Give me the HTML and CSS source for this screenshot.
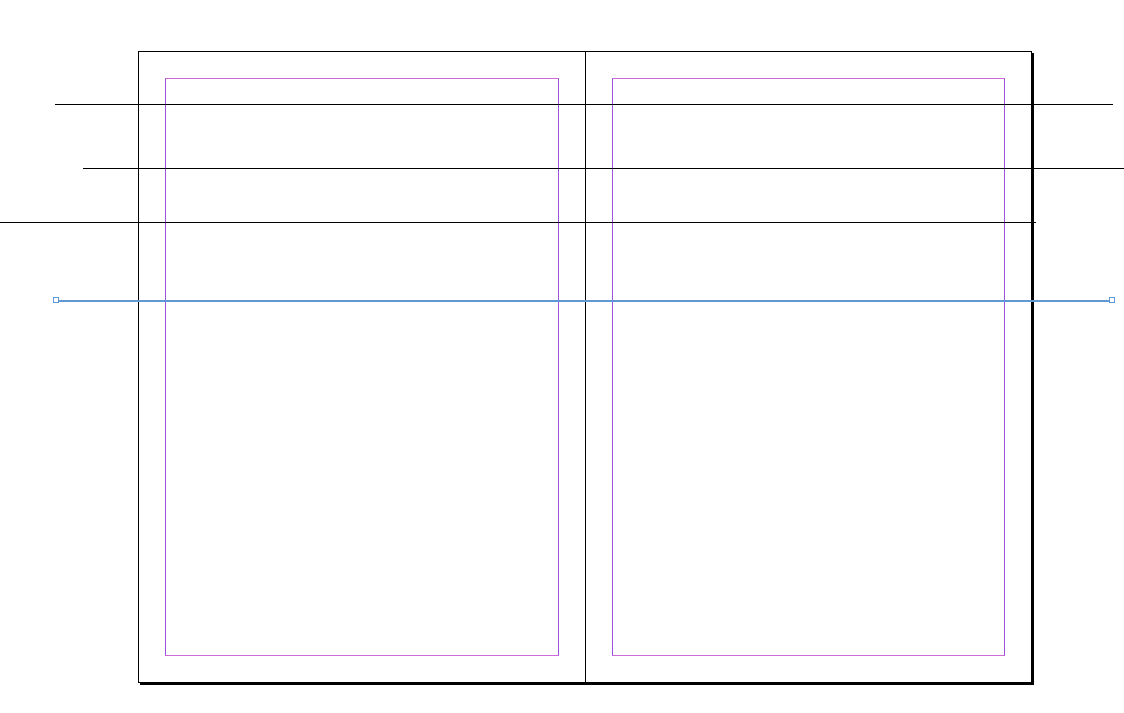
FILE: index.html
```html
<!DOCTYPE html>
<html>
<head>
    <meta charset="UTF-8">
    <meta name="viewport" content="width=device-width, initial-scale=1.0">
    <title>Spread</title>
    <link rel="stylesheet" href="styles.css">
</head>
<body>
    <div id="pasteboard">
        <div class="spread">
            <div class="page page-left">
                <div class="margins"></div>
            </div>
            <div class="page page-right">
                <div class="margins"></div>
            </div>
        </div>

        <!-- ruler guides -->
        <div class="guide guide-1"></div>
        <div class="guide guide-2"></div>
        <div class="guide guide-3"></div>

        <!-- selected guide -->
        <div class="guide-selected">
            <span class="handle handle-start"></span>
            <span class="handle handle-end"></span>
        </div>
    </div>
</body>
</html>
```

FILE: styles.css
```css
body {
    margin: 0;
    padding: 0;
    background-color: #fff;
    font-family: "Liberation Sans", Arial, sans-serif;
    overflow: hidden;
}

#pasteboard {
    position: relative;
    width: 1124px;
    height: 713px;
    padding: 51px 0 0 138px;
    box-sizing: border-box;
    overflow: hidden;
}

.spread {
    display: flex;
    width: 894px;
    height: 632px;
    box-sizing: border-box;
    border: 1px solid #000;
    box-shadow: 2px 2px 0 0 #000;
    background-color: #fff;
}

.page {
    padding: 26px;
    box-sizing: border-box;
    display: flex;
}

.page-left {
    width: 447px;
    border-right: 1px solid #000;
}

.page-right {
    width: 445px;
}

.margins {
    flex: 1;
    border-top: 1px solid #d06ad8;
    border-bottom: 1px solid #d06ad8;
    border-left: 1px solid #9a52dc;
    border-right: 1px solid #9a52dc;
}

.guide {
    position: absolute;
    height: 1px;
    background-color: #000;
}

.guide-1 {
    top: 104px;
    left: 55px;
    width: 1058px;
}

.guide-2 {
    top: 168px;
    left: 83px;
    right: 0;
}

.guide-3 {
    top: 222px;
    left: 0;
    width: 1036px;
}

.guide-selected {
    position: absolute;
    top: 300px;
    left: 56px;
    width: 1056px;
    height: 2px;
    background-color: #5f98d4;
}

.handle {
    position: absolute;
    top: -3px;
    width: 4px;
    height: 4px;
    border: 1px solid #5f98d4;
    background-color: #fff;
}

.handle-start {
    left: -3px;
}

.handle-end {
    right: -3px;
}
```
